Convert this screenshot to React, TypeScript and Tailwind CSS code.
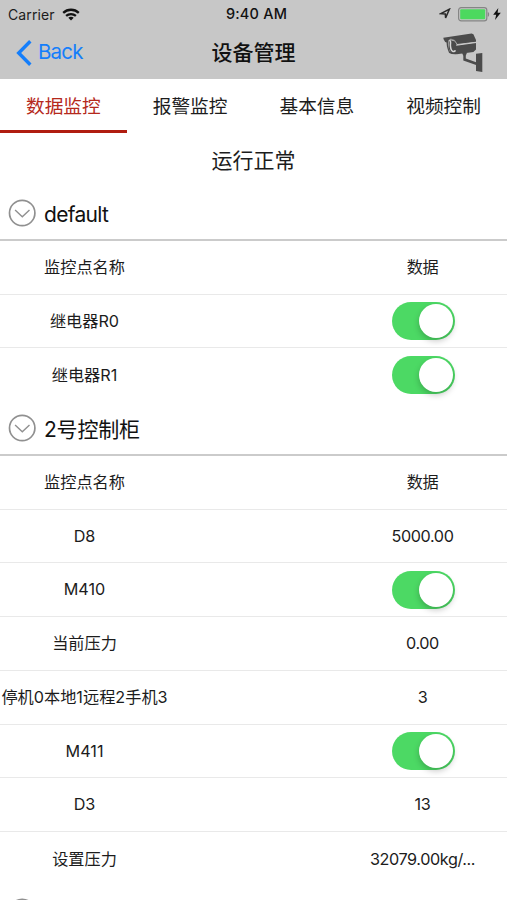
import React from 'react';

type Value = { kind: 'text'; text: string } | { kind: 'switch' };
type Row = { name: string; value: Value };
type Section = { title: string; rows: Row[] };

const text = (t: string): Value => ({ kind: 'text', text: t });
const on: Value = { kind: 'switch' };

const tabs = ['数据监控', '报警监控', '基本信息', '视频控制'];

const sections: Section[] = [
  {
    title: 'default',
    rows: [
      { name: '监控点名称', value: text('数据') },
      { name: '继电器R0', value: on },
      { name: '继电器R1', value: on },
    ],
  },
  {
    title: '2号控制柜',
    rows: [
      { name: '监控点名称', value: text('数据') },
      { name: 'D8', value: text('5000.00') },
      { name: 'M410', value: on },
      { name: '当前压力', value: text('0.00') },
      { name: '停机0本地1远程2手机3', value: text('3') },
      { name: 'M411', value: on },
      { name: 'D3', value: text('13') },
      { name: '设置压力', value: text('32079.00kg/...') },
    ],
  },
];

function WifiIcon() {
  return (
    <svg width="18" height="13" viewBox="0 0 18 13" fill="none" stroke="#111" strokeWidth="2.3">
      <path d="M1.2 4.8C5.6.7 12.4.7 16.8 4.8" />
      <path d="M4.1 7.9c2.8-2.5 7-2.5 9.8 0" />
      <path d="M9 12.4 6.3 9.8c1.5-1.3 3.9-1.3 5.4 0Z" fill="#111" stroke="none" />
    </svg>
  );
}

function LocationIcon() {
  return (
    <svg width="12" height="12" viewBox="0 0 12 12" fill="none" stroke="#2a2a2a" strokeWidth="1.5">
      <path d="M10.4 1.2 2 5.6l4.3.3.3 4Z" />
    </svg>
  );
}

function BatteryIcon() {
  return (
    <svg width="32" height="15" viewBox="0 0 32 15" fill="none">
      <rect x="0.6" y="0.6" width="28.2" height="13.2" rx="2.6" stroke="#858585" strokeWidth="1.2" />
      <rect x="2.2" y="2.2" width="25" height="10" rx="1" fill="#4cd95f" />
      <path d="M29.8 5c1.8.6 1.8 4.2 0 4.8Z" fill="#858585" />
    </svg>
  );
}

function BoltIcon() {
  return (
    <svg width="8" height="12" viewBox="0 0 8 12" fill="#111">
      <path d="M5.3 0 .2 6.8h3L2 12l5.8-7.2H4.6Z" />
    </svg>
  );
}

function CameraIcon() {
  return (
    <svg width="41" height="40" viewBox="0 0 41 40" fill="#4b4b4b">
      {/* camera body */}
      <path d="M5.6 6.6 12 8.6l2 3.3 19-2.3v6.8l-2.6 2.6-16.6 2.2-5.8-1-2.4-5Z" />
      {/* rim of the front glass */}
      <path d="M4.6 7c-.8 3.6-.3 7.4 2 12.4 1.6 1 3.8 1.3 6.4 1.2" fill="none" stroke="#4b4b4b" strokeWidth="1.3" />
      <path d="M6.2 7.2c2.2.4 1.2 2.6 1.2 5 .1 3 1 5.6 2.6 6.3 1.2.3 2-.1 2.3-1.2" fill="none" stroke="#d6d6d6" strokeWidth="1.5" />
      {/* hood */}
      <path d="M.3 4.7 28.6.6l1.8.7L33 7v1.7L14.2 11 11.4 7.6 7.2 6.3 5.2 7.2 4.3 9.8 2.2 9 .7 6.4Z" />
      <path d="m13.2 12.2 19.9-2.7" fill="none" stroke="#cfcfcf" strokeWidth="1.1" />
      <path d="m7.4 5.9 4.3 1.5 2.3 3.8" fill="none" stroke="#a5a5a5" strokeWidth=".7" />
      {/* wall bracket */}
      <path d="M18.9 19.6h5.2l-1.3 3v3l10.3 3.6V32L20.3 27.4v-4.7Z" />
      <path d="M33 20.8 39.3 20v18.9l-6.3-.9Z" />
    </svg>
  );
}

function ChevronCircle() {
  return (
    <svg className="shrink-0" width="28" height="28" viewBox="0 0 28 28" fill="none" stroke="#909090">
      <circle cx="14.2" cy="14" r="12.7" strokeWidth="1.7" />
      <path d="m7.1 11 7.2 6.8 7.2-6.8" strokeWidth="1.4" />
    </svg>
  );
}

function Switch() {
  return (
    <div className="ml-[2px] flex h-[38px] w-[63px] items-center justify-end rounded-full bg-[#4cd964] pr-[2px]">
      <div className="size-[34px] rounded-full bg-white shadow-[0_3px_6px_rgba(0,0,0,0.22)]" />
    </div>
  );
}

function SectionHeader({ title }: { title: string }) {
  return (
    <div className="flex h-[53.75px] items-center gap-2 border-b-2 border-[#cbcbcb] pl-2 text-[21px] text-[#111]">
      <ChevronCircle />
      <span className={title === 'default' ? 'pt-[3px] tracking-[-0.7px]' : 'pt-[3px] tracking-[-0.2px]'}>
        {title}
      </span>
    </div>
  );
}

export default function App() {
  return (
    <div className="h-[900px] w-[507px] overflow-hidden bg-white font-['Inter','Noto_Sans_CJK_SC',sans-serif] text-[#1c1c1c]">
      <header className="h-[79px] bg-[#c7c7c7]">
        <div className="grid h-7 grid-cols-3 items-center">
          <div className="flex items-center gap-[7px] pl-2 text-[14px]">
            <span className="w-[47px] tracking-[0.1px]">Carrier</span>
            <WifiIcon />
          </div>
          <div className="pl-[6px] text-center text-[14.5px] font-medium tracking-[0.2px] text-[#111]">9:40 AM</div>
          <div className="flex items-center justify-end pr-[6px]">
            <LocationIcon />
            <span className="w-[7px]" />
            <BatteryIcon />
            <span className="w-[3px]" />
            <BoltIcon />
          </div>
        </div>
        <div className="grid h-[49px] grid-cols-3 items-center">
          <div className="flex items-center gap-[6px] pl-4 text-[20.5px] tracking-[-0.8px] text-[#147efb]">
            <svg width="16" height="26" viewBox="0 0 16 26" fill="none" stroke="#147efb" strokeWidth="3.4">
              <path d="M14.3 1.3 2.7 13l11.6 11.7" />
            </svg>
            <span>Back</span>
          </div>
          <h1 className="text-center text-[21px] font-medium text-[#111]">设备管理</h1>
          <div className="flex justify-end pr-[23px]">
            <CameraIcon />
          </div>
        </div>
      </header>

      <nav className="grid h-[54px] grid-cols-4 text-[18.7px]">
        {tabs.map((tab, i) => (
          <button
            key={tab}
            className={
              i === 0
                ? 'border-b-[3px] border-[#b01c10] pt-[6px] text-[#b5291c]'
                : 'border-b-[3px] border-transparent pt-[6px] text-[#1c1c1c]'
            }
          >
            {tab}
          </button>
        ))}
      </nav>

      <div className="flex h-[54px] items-center justify-center pt-[2px] text-[21px]">运行正常</div>

      {sections.map((section) => (
        <section key={section.title}>
          <SectionHeader title={section.title} />
          {section.rows.map((row, i) => (
            <div
              key={row.name}
              className={
                i === section.rows.length - 1
                  ? 'grid h-[53.75px] grid-cols-3 items-center whitespace-nowrap text-[16.2px]'
                  : 'grid h-[53.75px] grid-cols-3 items-center whitespace-nowrap border-b border-[#e9e9e9] text-[16.2px]'
              }
            >
              <div className="text-center">{row.name}</div>
              <div />
              <div className="flex justify-center">
                {row.value.kind === 'switch' ? (
                  <Switch />
                ) : (
                  <span className="tracking-[-0.4px]">{row.value.text}</span>
                )}
              </div>
            </div>
          ))}
        </section>
      ))}
      <SectionHeader title="" />
    </div>
  );
}
